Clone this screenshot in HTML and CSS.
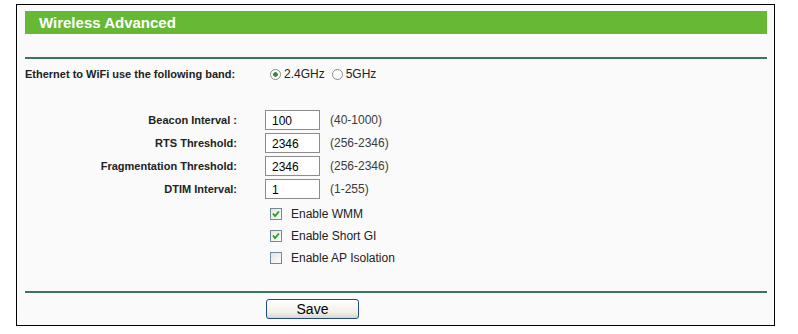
FILE: index.html
```html
<!DOCTYPE html>
<html lang="en">

<head>
    <meta charset="UTF-8">
    <title>Wireless Advanced</title>
    <link rel="stylesheet" href="styles.css">
</head>

<body>
    <div class="frame">
        <div class="title">Wireless Advanced</div>
        <div class="rule top-rule"></div>

        <!-- Band -->
        <div class="row band">
            <div class="label left">Ethernet to WiFi use the following band:</div>
            <div class="control">
                <input type="radio" class="radio" name="band" id="b24" checked>
                <label for="b24" class="opt">2.4GHz</label>
                <input type="radio" class="radio" name="band" id="b5">
                <label for="b5" class="opt">5GHz</label>
            </div>
        </div>

        <!-- Intervals -->
        <div class="fields">
            <div class="row field">
                <div class="label">Beacon Interval :</div>
                <div class="control">
                    <input type="text" class="text" value="100">
                    <span class="range">(40-1000)</span>
                </div>
            </div>
            <div class="row field">
                <div class="label">RTS Threshold:</div>
                <div class="control">
                    <input type="text" class="text" value="2346">
                    <span class="range">(256-2346)</span>
                </div>
            </div>
            <div class="row field">
                <div class="label">Fragmentation Threshold:</div>
                <div class="control">
                    <input type="text" class="text" value="2346">
                    <span class="range">(256-2346)</span>
                </div>
            </div>
            <div class="row field">
                <div class="label">DTIM Interval:</div>
                <div class="control">
                    <input type="text" class="text" value="1">
                    <span class="range">(1-255)</span>
                </div>
            </div>
        </div>

        <!-- Options -->
        <div class="checks">
            <div class="row check">
                <div class="label"></div>
                <div class="control">
                    <input type="checkbox" class="box" id="wmm" checked>
                    <label for="wmm" class="opt">Enable WMM</label>
                </div>
            </div>
            <div class="row check">
                <div class="label"></div>
                <div class="control">
                    <input type="checkbox" class="box" id="sgi" checked>
                    <label for="sgi" class="opt">Enable Short GI</label>
                </div>
            </div>
            <div class="row check">
                <div class="label"></div>
                <div class="control">
                    <input type="checkbox" class="box" id="apiso">
                    <label for="apiso" class="opt">Enable AP Isolation</label>
                </div>
            </div>
        </div>

        <div class="rule bottom-rule"></div>

        <div class="row actions">
            <div class="label"></div>
            <div class="control">
                <button class="save">Save</button>
            </div>
        </div>
    </div>
</body>

</html>
```

FILE: styles.css
```css
/* Basic Reset */
* {
    box-sizing: border-box;
    margin: 0;
    padding: 0;
}

body {
    background: #ffffff;
    font-family: 'Liberation Sans', Arial, sans-serif;
    font-size: 12px;
    color: #1e1e1e;
}

/* Outer frame */
.frame {
    margin: 4px 0 0 16px;
    width: 759px;
    height: 322px;
    border: 1px solid #000;
    background: #fafafa;
    padding: 6px 7px 0 8px;
}

/* Green title bar */
.title {
    height: 23px;
    background: #66b835;
    color: #ffffff;
    font-size: 15px;
    font-weight: bold;
    line-height: 23px;
    padding-left: 14px;
}

.rule {
    height: 2px;
    background: #3b7466;
}

.top-rule {
    margin-top: 23px;
}

/* Form rows */
.row {
    display: flex;
    align-items: center;
}

.label {
    width: 212px;
    flex: none;
    text-align: right;
    font-size: 11px;
    font-weight: bold;
    color: #222;
    white-space: nowrap;
}

.label.left {
    text-align: left;
}

.control {
    display: flex;
    align-items: center;
    padding-left: 28px;
}

.band {
    height: 22px;
    margin-top: 4px;
}

.fields {
    margin-top: 23px;
}

.field {
    height: 23px;
}

.checks {
    margin-top: 3px;
}

.check {
    height: 22px;
}

.bottom-rule {
    margin-top: 22px;
}

.actions {
    margin-top: 6px;
}

/* Inputs */
.text {
    width: 55px;
    height: 20px;
    border: 1px solid #8c8c8c;
    background: #fff;
    font-family: 'Liberation Sans', Arial, sans-serif;
    font-size: 12px;
    color: #000;
    padding: 2px 6px 0;
    outline: none;
}

.range {
    margin-left: 10px;
    color: #3c3c3c;
}

.opt {
    color: #222;
}

.radio {
    appearance: none;
    width: 11px;
    height: 11px;
    border: 1px solid #8a8a8a;
    border-radius: 50%;
    background: #fff;
    margin: 0 3px 0 5px;
}

.radio:checked {
    background: radial-gradient(circle, #3a8a3a 0, #3a8a3a 2px, #fff 2.6px);
}

.radio + .opt + .radio {
    margin-left: 7px;
}

.box {
    appearance: none;
    width: 12px;
    height: 12px;
    border: 1px solid #6f8a98;
    background: linear-gradient(135deg, #e4e4e4, #fdfdfd);
    margin: 0 9px 0 5px;
}

.box:checked {
    background: url("data:image/svg+xml,%3Csvg xmlns='http://www.w3.org/2000/svg' width='10' height='10'%3E%3Cpath d='M2 4.5 L4 7 L8 2.5' fill='none' stroke='%2321a121' stroke-width='1.8'/%3E%3C/svg%3E") center no-repeat, linear-gradient(135deg, #e4e4e4, #fdfdfd);
}

/* Save button */
.save {
    width: 93px;
    height: 20px;
    margin-left: 1px;
    border: 1px solid #1f4c88;
    border-radius: 3px;
    background: linear-gradient(#ffffff, #f0efe8 70%, #d9d6cc);
    font-family: 'Liberation Sans', Arial, sans-serif;
    font-size: 14px;
    color: #000;
    cursor: pointer;
}
```
